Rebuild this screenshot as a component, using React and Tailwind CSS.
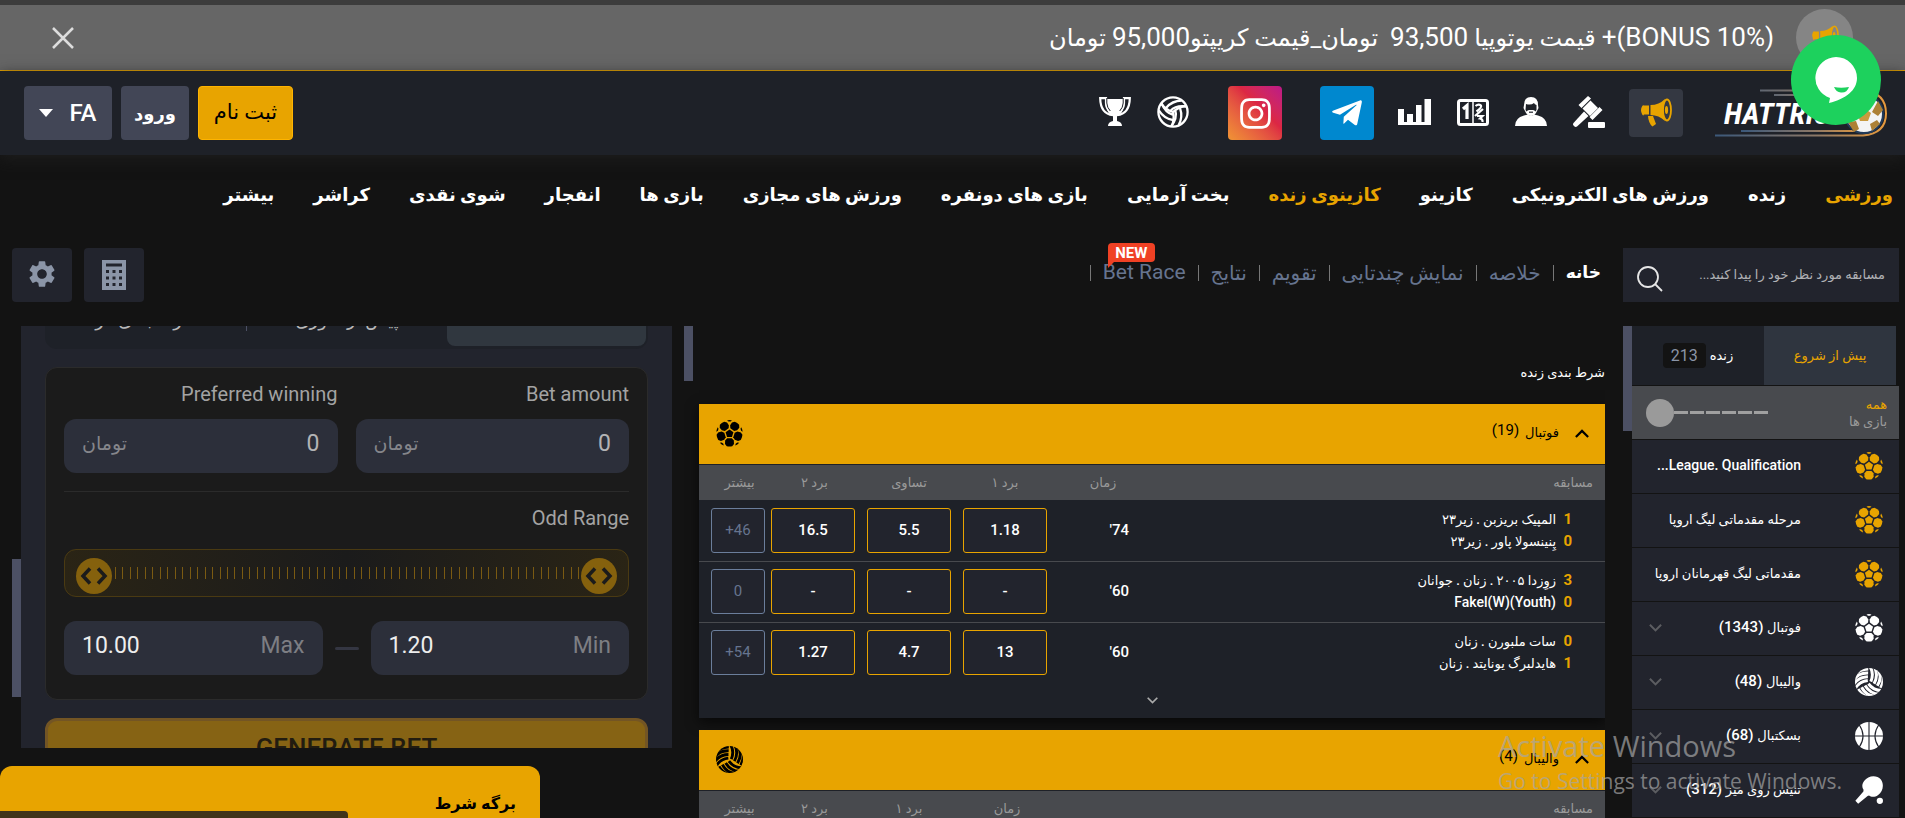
import React from "react";
import { FaTelegramPlane, FaInstagram } from "react-icons/fa";
import { MdSettings } from "react-icons/md";

function Soccer({ className }) {
  return (
    <svg viewBox="0 0 40 40" className={className} fill="currentColor" aria-hidden="true">
      <path d="M20 14l5.800 4.300-2.200 6.700h-7.200l-2.200-6.700z" />
      {[36, 108, 180, 252, 324].map((a) => (
        <path key={a} transform={`rotate(${a} 20 20)`} d="M16.500 13L13.600 9.600 13.300 4.500 16 1.200Q20 0 24 1.200L26.700 4.500 26.400 9.600 23.500 13z" />
      ))}
      {[0, 72, 144, 216, 288].map((a) => (
        <path key={a} transform={`rotate(${a} 20 20)`} d="M16.400.600Q20-.400 23.600.600L21.500 2.400h-3z" />
      ))}
    </svg>
  );
}

function VolleySolid({ className }) {
  return (
    <svg viewBox="0 0 40 40" className={className} aria-hidden="true">
      <defs>
        <clipPath id="volley-clip">
          <circle cx="20" cy="20" r="20" />
        </clipPath>
      </defs>
      <g clipPath="url(#volley-clip)" fill="none" stroke="currentColor" strokeWidth="4.300">
        {[0, 120, 240].map((a) => (
          <g key={a} transform={`rotate(${a} 20 20)`}>
            <path d="M21.500 -2 Q27.500 8 22.600 19.500" />
            <path d="M27.500 -2 Q34 10 27.200 22.400" />
            <path d="M33 2 Q39.500 13 31.800 25.400" />
            <path d="M38.500 6 Q43 17 36.600 28.400" />
          </g>
        ))}
      </g>
    </svg>
  );
}

function Basketball({ className }) {
  return (
    <svg viewBox="0 0 40 40" className={className} aria-hidden="true">
      <defs>
        <mask id="basket-lines">
          <rect width="40" height="40" fill="#fff" />
          <g fill="none" stroke="#000" strokeWidth="1.600">
            <path d="M20 0V40M0 20H40M6 4Q17 20 6 36M34 4Q23 20 34 36" />
          </g>
        </mask>
      </defs>
      <circle cx="20" cy="20" r="20" fill="currentColor" mask="url(#basket-lines)" />
    </svg>
  );
}

function PingPong({ className }) {
  return (
    <svg viewBox="0 0 40 40" className={className} fill="currentColor" aria-hidden="true">
      <path d="M13 7C19-1 31-2 37 5c5 7 3 17-4 22-5 4-10 3-13 1l-2 .500L4.500 39.500.500 35.500 12 22l.200-2.400C9.500 16 10 11 13 7z" />
      <circle cx="35.500" cy="35.500" r="4.500" />
    </svg>
  );
}

function VolleyLine() {
  return (
    <svg viewBox="0 0 32 32" className="size-8" fill="none" stroke="currentColor" strokeWidth="2.300" aria-hidden="true">
      <circle cx="16" cy="16" r="14.600" />
      {[0, 120, 240].map((a) => (
        <g key={a} transform={`rotate(${a} 16 16)`}>
          <path d="M16 16Q9 14 4 7.500M13.500 14.700Q19 9 29.500 10.500M9.500 11.500Q15 5 24.500 4.500" />
        </g>
      ))}
    </svg>
  );
}

function Trophy() {
  return (
    <svg viewBox="0 0 32 32" className="size-8" aria-hidden="true">
      <path d="M8 3h16v8q0 7-6 9v5q5 1 5 5H9q0-4 5-5v-5q-6-2-6-9z" fill="currentColor" />
      <path d="M7.500 2.200H1.200q.300 15.500 12.800 17M24.500 2.200h6.300q-.300 15.500-12.800 17M7 1v6q0 5 4 9M25 1v6q0 5-4 9" fill="none" stroke="currentColor" strokeWidth="2.200" />
      <path d="M7.800 2v5q.200 4.500 3.500 8M24.200 2v5q-.200 4.500-3.500 8" fill="none" stroke="#1e2128" strokeWidth="1" />
    </svg>
  );
}

function Bars() {
  return (
    <svg viewBox="0 0 33 32" className="h-8 w-[33px]" fill="currentColor" aria-hidden="true">
      <path d="M0 13h6v13h3v-8h6v8h3V9h5.500v17h3V3H33v26H0z" />
    </svg>
  );
}

function ScoreCard() {
  return (
    <svg viewBox="0 0 32 32" className="size-8" aria-hidden="true">
      <rect x="1.500" y="4.500" width="29" height="24" rx="2" fill="none" stroke="currentColor" strokeWidth="3" />
      <path d="M16 5v23" stroke="currentColor" strokeWidth="1.500" />
      <path d="M6 13l4-3.500V23" fill="none" stroke="currentColor" strokeWidth="3.200" />
      <path d="M18.500 10q3-2.500 5.500-.500 1 2-4.500 6M18 20l8-7M20 20h5.500l-2.500 2.500q3 .500 2.500 3.500" fill="none" stroke="currentColor" strokeWidth="2.200" />
    </svg>
  );
}

function Agent() {
  return (
    <svg viewBox="0 0 32 32" className="size-8" aria-hidden="true">
      <path d="M0 30q0-8 9-10.500l4-1q3 3 6 0l4 1q9 2.500 9 10.500z" fill="currentColor" />
      <path d="M9 9q0-8 7-8t7 8l.500 3-1.500 3q-2 5-6 5t-6-5l-1.500-3z" fill="currentColor" />
      <path d="M11 8q5 1.500 8-1 .500 1.500 2.500 2V14l-1 1.500q-1-1.500-2.500-1.500h-4q-1.500 0-2.500 1.500L10.500 14z" fill="#1e2128" />
      <path d="M14 16.200h4" stroke="#1e2128" strokeWidth="1.200" />
    </svg>
  );
}

function Gavel() {
  return (
    <svg viewBox="0 0 32 32" className="size-8" fill="currentColor" aria-hidden="true">
      <path d="M15 0l3 2.500L8.500 12 5.500 9zM17.500 4.500l7.500 7.500-8 8-7.500-7.500zM26.500 11l3 3L19.500 24l-3-3z" />
      <path d="M11 15.500l4.500 4.500L4 30.500q-1.500 1-3-.500t-.500-3z" />
      <rect x="15" y="26" width="17" height="6" rx="1" />
    </svg>
  );
}

function Megaphone({ className }) {
  return (
    <svg viewBox="0 0 32 30" className={className} fill="currentColor" aria-hidden="true">
      <path d="M9 7.500v9H4q-1 2-2-.500Q0 12 2 8.500q1-2 2-1z" />
      <path d="M10.500 7Q19 7 25 1q-3.500 11 0 22-6-6-14.500-6z" />
      <ellipse cx="27" cy="12" rx="4" ry="10.500" fill="none" stroke="currentColor" strokeWidth="1.800" />
      <ellipse cx="26.500" cy="12" rx="1.600" ry="4" />
      <path d="M8 18h5l3 8-3.500 2.500q-4-3-4.500-10.500z" />
    </svg>
  );
}

function Logo() {
  return (
    <svg viewBox="0 0 174 54" className="h-[54px] w-[174px]" role="img" aria-label="Hattrick">
      <defs>
        <linearGradient id="logo-line" x1="0" x2="1">
          <stop offset="0" stopColor="#3b587a" />
          <stop offset=".600" stopColor="#8d7866" />
          <stop offset="1" stopColor="#e79a3d" />
        </linearGradient>
      </defs>
      <g fill="none" stroke="url(#logo-line)" strokeWidth="2">
        <path d="M45 4.500h103q23 2 23 23 0 20-23 22H0" />
        <path d="M59 9h90M26 45h120" />
      </g>
      <circle cx="149" cy="28" r="19" fill="#f4f4f4" stroke="#223b5a" strokeWidth="2" />
      <path d="M149 22l7 5-3 8h-8l-3-8z" fill="#c99a3e" />
      <path d="M163 15l5 9-5 6-6-4zM133 36l8-1 3 8-5 3zM157 45l-2-7 7-4 3 4z" fill="#ad8136" />
      <text x="9" y="38" direction="ltr" textAnchor="start" fontSize="30" fontWeight="700" fontStyle="italic" fontFamily="'Liberation Sans Narrow', 'Roboto Condensed', Roboto, sans-serif" fill="#fff">HATTRICK</text>
    </svg>
  );
}

function Chevron({ up, className }) {
  return (
    <svg viewBox="0 0 16 10" className={className} fill="none" stroke="currentColor" strokeWidth="2.500" aria-hidden="true">
      <path d={up ? "M1 9l7-7 7 7" : "M1 1l7 7 7-7"} />
    </svg>
  );
}

const NAV = [
  ["ورزشی", true],
  ["زنده"],
  ["ورزش های الکترونیکی"],
  ["کازینو"],
  ["کازینوی زنده", true],
  ["بخت آزمایی"],
  ["بازی های دونفره"],
  ["ورزش های مجازی"],
  ["بازی ها"],
  ["انفجار"],
  ["شوی نقدی"],
  ["کراشر"],
  ["بیشتر"],
];

const SUBNAV = ["خلاصه", "نمایش چندتایی", "تقویم", "نتایج"];

const SPORTS = [
  { name: "...League. Qualification", icon: Soccer, top: true, ltr: true },
  { name: "مرحله مقدماتی لیگ اروپا", icon: Soccer, top: true },
  { name: "مقدماتی لیگ قهرمانان اروپا", icon: Soccer, top: true },
  { name: "فوتبال", count: 1343, icon: Soccer },
  { name: "والیبال", count: 48, icon: VolleySolid },
  { name: "بسکتبال", count: 68, icon: Basketball },
  { name: "تنیس روی میز", count: 312, icon: PingPong },
];

const MATCHES = [
  { a: "المپیک بریزبن . زیر۲۳", b: "پِنینسولا پاور . زیر۲۳", sa: 1, sb: 0, time: "74'", odds: ["1.18", "5.5", "16.5"], more: "+46" },
  { a: "زوِزدا ۲۰۰۵ . زنان . جوانان", b: "Fakel(W)(Youth)", sa: 3, sb: 0, time: "60'", odds: ["-", "-", "-"], more: "0" },
  { a: "سات ملبورن . زنان", b: "هایدلبرگ یونایتد . زنان", sa: 0, sb: 1, time: "60'", odds: ["13", "4.7", "1.27"], more: "+54" },
];

function Banner() {
  return (
    <div className="flex h-[71px] shrink-0 items-center border-t-5 border-b border-t-[#3c3c3c] border-b-[#e8a400] bg-[#666] px-[52px]">
      <span className="flex size-[57px] items-center justify-center rounded-full bg-[#858585] text-[#e8a400]">
        <Megaphone className="h-[26px] w-7" />
      </span>
      <p className="ms-[22px] flex-1 text-[24px] leading-8 whitespace-nowrap text-white">
        <span className="text-[26px]">(BONUS 10%)+</span> قیمت یوتوپیا <span className="text-[26px]">93,500</span>
        {"\u00a0 "}تومان_قیمت کریپتو<span className="text-[26px]">95,000</span> تومان
      </p>
      <button aria-label="بستن" className="text-[#ddd]">
        <svg viewBox="0 0 22 22" className="size-[22px]" stroke="currentColor" strokeWidth="2.500" aria-hidden="true">
          <path d="M1 1l20 20M21 1L1 21" />
        </svg>
      </button>
    </div>
  );
}

function Header() {
  return (
    <header className="flex h-21 shrink-0 items-center bg-[#1e2128] ps-4 pe-6 text-white shadow-[0_4px_14px_rgba(30,30,30,0.9)]">
      <a href="#home"><Logo /></a>
      <button aria-label="اطلاعیه" className="ms-8 flex h-12 w-[54px] items-center justify-center rounded-sm bg-[#343842] text-[#e8a400]">
        <Megaphone className="h-[30px] w-8" />
      </button>
      <div className="ms-6 flex items-center gap-[26px] pb-[2px]">
        <a href="#rules" aria-label="قوانین"><Gavel /></a>
        <a href="#agent" aria-label="نماینده"><Agent /></a>
        <a href="#scores" aria-label="امتیازات"><ScoreCard /></a>
        <a href="#stats" aria-label="آمار"><Bars /></a>
      </div>
      <a href="#telegram" aria-label="Telegram" className="ms-6 flex size-[54px] items-center justify-center rounded-sm bg-[#0088cf]">
        <FaTelegramPlane size={34} />
      </a>
      <a href="#instagram" aria-label="Instagram" className="ms-[38px] flex size-[54px] items-center justify-center rounded-sm bg-linear-to-tr from-[#f09433] via-[#dc2743] via-60% to-[#bc1888]">
        <FaInstagram size={35} />
      </a>
      <div className="ms-[39px] flex items-center gap-[26px] pb-[2px]">
        <a href="#volleyball" aria-label="والیبال"><VolleyLine /></a>
        <a href="#trophy" aria-label="جام"><Trophy /></a>
      </div>
      <div className="ms-auto flex gap-[9px] text-[18px] font-bold">
        <button className="h-[54px] w-[95px] rounded-sm border border-[#ffb400] bg-[#e8a400] text-[21px] font-normal text-black">ثبت نام</button>
        <button className="h-[54px] w-[68px] rounded-sm bg-[#424656]">ورود</button>
        <button className="flex h-[54px] w-[88px] items-center justify-center gap-4 rounded-sm bg-[#424656] text-[24px] font-medium">
          FA
          <svg viewBox="0 0 14 8" className="h-2 w-[14px]" fill="currentColor" aria-hidden="true"><path d="M0 0h14L7 8z" /></svg>
        </button>
      </div>
    </header>
  );
}

function SubHeader() {
  return (
    <div className="flex h-[54px] shrink-0 pe-3">
      <div className="flex w-[276px] shrink-0 items-center bg-[#22242d] px-[14px]">
        <input aria-label="جستجو" placeholder="مسابقه مورد نظر خود را پیدا کنید..." className="min-w-0 flex-1 bg-transparent text-[13px] text-white placeholder-[#b0b1b5] outline-none" />
        <button aria-label="جستجو" className="mt-2 text-[#e6e6e6]">
          <svg viewBox="0 0 26 26" className="size-[26px]" fill="none" stroke="currentColor" strokeWidth="1.800" aria-hidden="true">
            <circle cx="11" cy="11" r="10" /><path d="M18 18l7 7" />
          </svg>
        </button>
      </div>
      <nav className="ms-[22px] flex flex-1 items-center gap-3 pb-1 text-[20px] whitespace-nowrap text-[#66748f]">
        <a href="#main" className="text-[17px] font-bold text-white">خانه</a>
        {SUBNAV.map((t) => (
          <React.Fragment key={t}>
            <span className="h-4 w-px bg-[#777]" />
            <a href="#sub">{t}</a>
          </React.Fragment>
        ))}
        <span className="h-4 w-px bg-[#777]" />
        <a href="#race" className="relative text-[21px]">
          Bet Race
          <span className="absolute -top-[14px] left-[5px] z-10 flex h-[19px] w-[47px] items-center justify-center rounded-t-sm rounded-br-sm bg-[#f04124] text-[15px] font-bold text-white">
            NEW
            <svg viewBox="0 0 6 6" className="absolute top-full left-0 size-[6px]" fill="#f04124" aria-hidden="true"><path d="M0 0h6L0 6z" /></svg>
          </span>
        </a>
        <span className="h-4 w-px bg-[#777]" />
      </nav>
      <div className="flex gap-3 text-[#8b95a7]">
        <button aria-label="ماشین حساب" className="flex h-[54px] w-15 items-center justify-center rounded-sm bg-[#22242d]">
          <svg viewBox="0 0 24 30" className="h-[30px] w-6" aria-hidden="true">
            <path fill="currentColor" fillRule="evenodd" d="M0 0h24v30H0zM4 3.500v3h16v-3zM4 10v3h3v-3zM10.500 10v3h3v-3zM17 10v3h3v-3zM4 16.500v3h3v-3zM10.500 16.500v3h3v-3zM17 16.500v3h3v-3zM4 23v3h3v-3zM10.500 23v3h3v-3zM17 23v3h3v-3z" />
          </svg>
        </button>
        <button aria-label="تنظیمات" className="flex h-[54px] w-15 items-center justify-center rounded-sm bg-[#22242d] pb-[2px]">
          <MdSettings size={32} />
        </button>
      </div>
    </div>
  );
}

function Sidebar() {
  return (
    <aside className="flex min-h-0 w-[276px] shrink-0 overflow-hidden">
      <div className="min-w-0 flex-1">
        <div className="flex pr-[3px] text-[13px]">
          <button className="h-[59px] flex-1 bg-[#2f353f] text-[#e8a400]">پیش از شروع</button>
          <button className="flex h-[59px] flex-1 items-center justify-center gap-1 bg-[#1e2128] font-medium text-white">
            زنده
            <span className="rounded-sm bg-[#131313] px-2 text-[16px] leading-[25px] font-normal text-[#8b95a7]">213</span>
          </button>
        </div>
        <div className="mt-px flex h-[53px] items-center justify-between bg-[#484a4e] ps-3 pe-[14px]">
          <div className="text-[13px] leading-[17px] text-[#9a9a9a]">
            <div className="text-[#e8a400]">همه</div>
            <div>بازی ها</div>
          </div>
          <div className="relative flex h-7 w-[122px] items-center">
            <input type="range" aria-label="بازه زمانی" className="absolute inset-0 w-full opacity-0" />
            <div className="flex flex-1 gap-[2px]">
              {[0, 1, 2, 3, 4, 5].map((i) => <span key={i} className="h-[3px] flex-1 bg-[#a0a0a0]" />)}
            </div>
            <span className="size-7 rounded-full bg-[#9a9a9a]" />
          </div>
        </div>
        <ul>
          {SPORTS.map(({ name, count, icon: Icon, top, ltr }) => (
            <li key={name} className="mt-px">
              <a href="#sport" className="flex h-[53px] items-center gap-[54px] bg-[#22242d] px-4 pb-[2px] text-white">
                <Icon className={top ? "size-7 shrink-0 text-[#e8a400]" : "size-7 shrink-0"} />
                <span dir={ltr ? "ltr" : "rtl"} className={ltr ? "text-[14px] font-medium whitespace-nowrap" : "text-[13px] font-medium whitespace-nowrap"}>
                  {name}
                  {count && <span className="text-[15px]"> ({count})</span>}
                </span>
                {count && <span className="-ms-[54px] flex flex-1 justify-end text-[#5c5d61]"><Chevron className="h-2 w-[15px]" /></span>}
              </a>
            </li>
          ))}
        </ul>
      </div>
      <div className="h-[105px] w-[9px] bg-[#4c5064]" />
    </aside>
  );
}

function BlockHeader({ title, count, icon: Icon }) {
  return (
    <button className="flex h-15 w-full items-center bg-[#e8a400] ps-4 pe-[17px] pb-[2px] text-black">
      <Chevron up className="h-[9px] w-[14px]" />
      <span className="ms-4 text-[13px]">{title}</span>
      <span className="ms-[6px] pb-[6px] text-[15px]">({count})</span>
      <Icon className="ms-auto size-[27px]" />
    </button>
  );
}

function Th({ children, className }) {
  return <th className={`h-[35px] p-0 font-normal ${className}`}>{children}</th>;
}

function MatchBlock() {
  return (
    <section className="bg-[#1e2128] shadow-[0_4px_12px_rgba(0,0,0,0.6)]">
      <BlockHeader title="فوتبال" count={19} icon={Soccer} />
      <table className="mt-px w-full border-collapse text-[13px]">
        <thead className="bg-[#484a4e] text-[#9a9a9a]">
          <tr>
            <Th className="ps-3 text-start">مسابقه</Th>
            <Th className="w-[92px] pe-2">زمان</Th>
            <Th className="w-24">برد ۱</Th>
            <Th className="w-24">تساوی</Th>
            <Th className="w-[93px]">برد ۲</Th>
            <Th className="w-[69px] pe-3">بیشتر</Th>
          </tr>
        </thead>
        <tbody>
          {MATCHES.map((m, i) => (
            <tr key={m.a} className={i < 2 ? "h-[61px] border-b border-[#484a4e]" : "h-15"}>
              <td className="ps-[33px]">
                {[[m.sa, m.a], [m.sb, m.b]].map(([s, n]) => (
                  <div key={n} className="flex h-[22px] items-center gap-2 text-[13px] font-medium whitespace-nowrap text-white">
                    <span className="w-2 text-[15px] font-bold text-[#e8a400]">{s}</span>
                    <span className={n.startsWith("F") ? "text-[14px]" : ""}>{n}</span>
                  </div>
                ))}
              </td>
              <td className="ps-4 text-start text-[15px] font-medium text-white">{m.time}</td>
              {m.odds.map((o, j) => (
                <td key={j} className={j === 2 ? "ps-[6px] pe-[3px]" : "px-[6px]"}>
                  <button className="h-[45px] w-[84px] rounded-[3px] border border-[#e8a400] bg-[#22242d] text-[15px] font-medium text-white">{o}</button>
                </td>
              ))}
              <td className="ps-[3px] pe-3">
                <button dir="ltr" className="h-[45px] w-[54px] rounded-[3px] border border-[#6b7e9b] bg-[#22242d] text-[15px] text-[#66748f]">{m.more}</button>
              </td>
            </tr>
          ))}
        </tbody>
      </table>
      <button aria-label="نمایش بیشتر" className="flex h-9 w-full items-center justify-center text-[#aaa]">
        <Chevron className="h-[7px] w-[11px]" />
      </button>
    </section>
  );
}

function Center() {
  return (
    <main className="flex min-h-0 min-w-0 flex-1 gap-[6px] overflow-hidden">
      <div className="min-w-0 flex-1">
        <h2 className="mt-[36px] mb-5 text-[13px] leading-[22px] font-medium text-white">شرط بندی زنده</h2>
        <MatchBlock />
        <section className="mt-3 bg-[#1e2128]">
          <BlockHeader title="والیبال" count={4} icon={VolleySolid} />
          <table className="mt-px w-full border-collapse text-[13px]">
            <thead className="bg-[#484a4e] text-[#9a9a9a]">
              <tr>
                <Th className="ps-3 text-start">مسابقه</Th>
                <Th className="w-[92px] pe-2">زمان</Th>
                <Th className="w-24">برد ۱</Th>
                <Th className="w-[93px]">برد ۲</Th>
                <Th className="w-[69px] pe-3">بیشتر</Th>
              </tr>
            </thead>
          </table>
        </section>
      </div>
      <div className="h-[55px] w-[9px] bg-[#4c5064]" />
    </main>
  );
}

function Money({ label, id }) {
  return (
    <div className="min-w-0 flex-1">
      <label htmlFor={id} className="block text-[20px] leading-6 text-[#a3a3a3]">{label}</label>
      <div className="mt-[13px] flex h-[54px] items-center rounded-xl bg-[#2c2f3a] px-[18px] pb-1">
        <input id={id} defaultValue="0" className="min-w-0 flex-1 bg-transparent text-[23px] leading-7 text-[#b3b3b5] outline-none" />
        <span className="text-[19px] text-[#85868b]">تومان</span>
      </div>
    </div>
  );
}

function Limit({ label, value, id }) {
  return (
    <div className="flex h-[54px] min-w-0 flex-1 items-center rounded-xl bg-[#2c2f3a] px-[18px] pb-1 text-[23px]">
      <label htmlFor={id} className="text-[#7d7e83]">{label}</label>
      <input id={id} dir="ltr" defaultValue={value} className="min-w-0 flex-1 bg-transparent text-left leading-7 text-[#ededed] outline-none" />
    </div>
  );
}

function Handle() {
  return (
    <svg viewBox="0 0 36 36" className="mt-[5px] size-9 shrink-0" aria-hidden="true">
      <circle cx="18" cy="18" r="18" fill="#85610d" />
      <path d="M14 10.500L7 18l7 7.500M22 10.500l7 7.500-7 7.500" fill="none" stroke="#1b1b1b" strokeWidth="3.500" />
    </svg>
  );
}

function BetGenerator() {
  const ticks = Array.from({ length: 63 }, (_, i) => i);
  return (
    <aside className="mb-[70px] flex min-h-0 w-[660px] shrink-0 overflow-hidden">
      <div className="min-w-0 flex-1 bg-[#22242d] px-6">
        <div className="flex h-[23px] overflow-hidden rounded-b-xl bg-[#1e2128] px-[2px] pb-[3px] text-[18px] leading-6 text-[#b8b8b8]">
          <div className="h-5 flex-1 rounded-b-lg bg-[#30373f]" />
          <a href="#pre" className="-mt-[18px] flex-1 text-center">پیش از سوری</a>
          <span className="h-[5px] w-px bg-[#4c5064]" />
          <a href="#live" className="-mt-[18px] flex-1 text-center">شرط بندی فر</a>
        </div>
        <div className="mt-[18px] rounded-xl border border-[#2b2b2b] bg-[#1b1b1b] px-[18px] pt-[14px] pb-6">
          <div className="flex gap-[18px]">
            <Money label="Bet amount" id="bet" />
            <Money label="Preferred winning" id="win" />
          </div>
          <hr className="mt-[18px] border-[#2b2b2b]" />
          <div className="mt-[14px] text-[20px] leading-6 text-[#a3a3a3]">Odd Range</div>
          <div className="relative mt-[19px] flex h-12 items-center rounded-xl border border-[#4a3a12] bg-linear-to-r from-[#2a2415] via-[#1b1b1b] to-[#2a2415] px-[11px]">
            <input type="range" aria-label="Odd Range" className="absolute inset-0 w-full opacity-0" />
            <Handle />
            <div className="flex h-3 flex-1 justify-between px-[2px]">
              {ticks.map((i) => <span key={i} className="w-px bg-[#7a5a12]" />)}
            </div>
            <Handle />
          </div>
          <div className="mt-6 flex items-center gap-3">
            <Limit label="Min" value="1.20" id="min" />
            <span className="h-[3px] w-6 rounded-full bg-[#343642]" />
            <Limit label="Max" value="10.00" id="max" />
          </div>
        </div>
        <button className="mt-[18px] h-15 w-full rounded-xl border-3 border-[#735524] bg-[#866314] text-[26px] font-medium text-[#221c10]">GENERATE BET</button>
      </div>
      <div className="mt-[233px] h-[138px] w-[9px] bg-[#4c5064]" />
    </aside>
  );
}

export default function App() {
  return (
    <div dir="rtl" className="relative flex h-screen flex-col overflow-hidden bg-[#131313] font-[Roboto,'DejaVu_Sans',sans-serif]">
      <Banner />
      <Header />
      <nav className="flex h-[77px] shrink-0 items-center gap-[39px] px-3 pt-[2px] text-[18px] font-bold whitespace-nowrap text-white">
        {NAV.map(([t, hot]) => (
          <a key={t} href="#nav" className={hot ? "text-[#e8a400]" : ""}>{t}</a>
        ))}
      </nav>
      <div className="flex min-h-0 flex-1 flex-col ps-[6px] pt-4">
        <SubHeader />
        <div className="mt-6 flex min-h-0 flex-1">
          <Sidebar />
          <div className="w-[18px] shrink-0" />
          <Center />
          <div className="w-3 shrink-0" />
          <BetGenerator />
          <div className="w-3 shrink-0" />
        </div>
      </div>

      <div className="absolute bottom-0 left-0 h-[52px] w-[540px] overflow-hidden rounded-t-xl bg-[#e8a400] px-6 pt-6">
        <h3 className="text-[16px] leading-7 font-bold text-black">برگه شرط</h3>
        <div className="absolute bottom-0 left-0 h-[7px] w-[348px] rounded-tr-sm bg-[#40341a]" />
      </div>

      <button aria-label="گفتگو" className="absolute top-[35px] right-[24px] flex size-[90px] items-center justify-center rounded-full bg-[#1dd15d]">
        <svg viewBox="0 0 44 48" className="h-12 w-11" aria-hidden="true">
          <path fill="#fff" d="M22 1a21 21 0 0 1 21 21c0 12-11 21-28 25l1-5A21 21 0 0 1 22 1z" />
          <path fill="#1dd15d" d="M20 31q7 1.500 15 0-2 6-8 5.500-5-.500-7-5.500z" />
        </svg>
      </button>

      <div dir="ltr" className="pointer-events-none absolute right-[64px] bottom-[20px] w-[343px] font-['Open_Sans',sans-serif] whitespace-nowrap text-[#a6a6a6]/70">
        <p className="text-[29px] leading-[36px]">Activate Windows</p>
        <p className="text-[21px] leading-[34px]">Go to Settings to activate Windows.</p>
      </div>
    </div>
  );
}
